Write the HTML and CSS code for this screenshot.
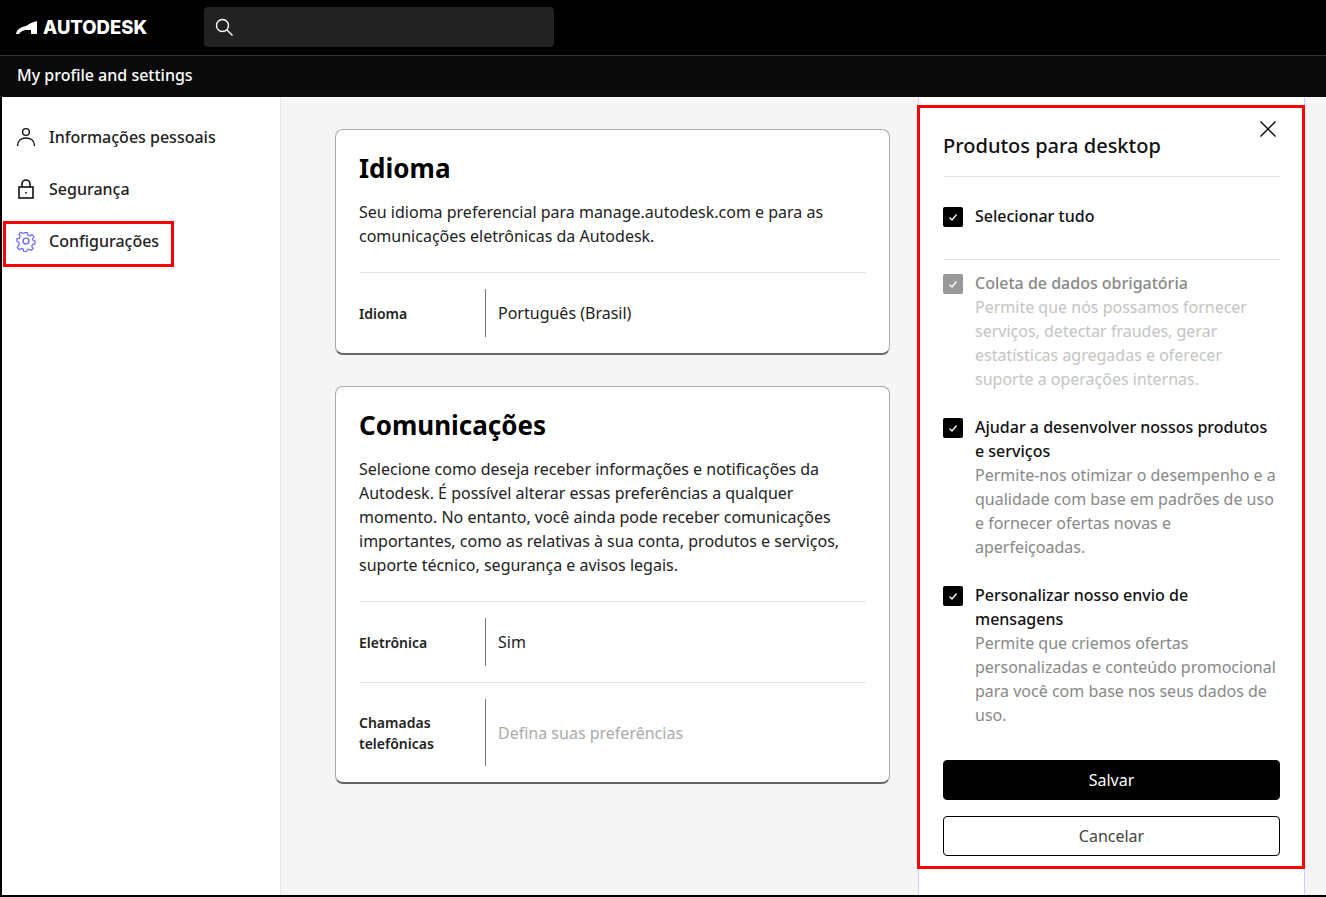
FILE: index.html
```html
<!DOCTYPE html>
<html lang="pt-BR">
<head>
  <meta charset="UTF-8">
  <title>My profile and settings</title>
  <link rel="stylesheet" href="styles.css">
</head>
<body>
  <div class="frame">
    <header class="topbar">
      <div class="logo">
        <svg class="logo-mark" width="21" height="13" viewBox="0 0 21 13"><path d="M0 13 C1 8 5 6 10 5 L15 2 L21 0 L21 13 L15 13 L15 9 L11 9 C7 9 4 11 3 13 Z" fill="#fff"/></svg>
        <span class="logo-text">AUTODESK</span>
      </div>
      <div class="search">
        <svg width="20" height="20" viewBox="0 0 20 20" fill="none" stroke="#fff" stroke-width="1.4"><circle cx="8.5" cy="8.5" r="6"/><path d="M13 13l5.5 5.5"/></svg>
      </div>
    </header>
    <div class="subbar">My profile and settings</div>

    <div class="content">
      <nav class="sidebar">
        <a class="nav-item">
          <svg width="20" height="20" viewBox="0 0 20 20" fill="none" stroke="#111" stroke-width="1.4"><circle cx="10" cy="5" r="3.4"/><path d="M1.5 19c0-5 3.5-8 8.500-8s8.500 3 8.500 8"/></svg>
          Informações pessoais
        </a>
        <a class="nav-item">
          <svg width="20" height="20" viewBox="0 0 20 20" fill="none" stroke="#111" stroke-width="1.6"><rect x="3" y="8" width="14" height="11"/><path d="M6 8V5a4 4 0 0 1 8 0v3"/><path d="M10 13v1.500"/></svg>
          Segurança
        </a>
        <a class="nav-item active">
          <svg width="22" height="22" viewBox="0 0 24 24" fill="none" stroke="#6a6af5" stroke-width="1.500" stroke-linejoin="round"><circle cx="12" cy="12" r="3.200"/><path d="M10.300 2h3.400l.6 3 2.300 1 2.600-1.600 2.400 2.400L20 9.400l1 2.300 2 .6v3.400l-3 .6-1 2.300 1.600 2.600-2.400 2.400-2.600-1.600-2.300 1-.6 2h-3.400l-.6-3-2.300-1-2.600 1.600-2.400-2.400L4 15.600l-1-2.300-2-.6V9.300l3-.6 1-2.300-1.600-2.600 2.400-2.400 2.600 1.600 2.300-1z" transform="translate(1.200 1.100) scale(.9)"/></svg>
          Configurações
        </a>
      </nav>

      <main class="main">
        <section class="card">
          <h2>Idioma</h2>
          <p>Seu idioma preferencial para manage.autodesk.com e para as comunicações eletrônicas da Autodesk.</p>
          <div class="row">
            <div class="row-label">Idioma</div>
            <div class="row-value">Português (Brasil)</div>
          </div>
        </section>
        <section class="card">
          <h2>Comunicações</h2>
          <p>Selecione como deseja receber informações e notificações da Autodesk. É possível alterar essas preferências a qualquer momento. No entanto, você ainda pode receber comunicações importantes, como as relativas à sua conta, produtos e serviços, suporte técnico, segurança e avisos legais.</p>
          <div class="row">
            <div class="row-label">Eletrônica</div>
            <div class="row-value">Sim</div>
          </div>
          <div class="row tall">
            <div class="row-label">Chamadas telefônicas</div>
            <div class="row-value empty">Defina suas preferências</div>
          </div>
        </section>
      </main>

      <aside class="panel">
        <button class="close" aria-label="Fechar">
          <svg width="18" height="18" viewBox="0 0 18 18" stroke="#111" stroke-width="1.500"><path d="M1.500 1.500l15 15M16.500 1.500l-15 15"/></svg>
        </button>
        <h3>Produtos para desktop</h3>
        <div class="select-all">
          <span class="check"><svg width="12" height="12" viewBox="0 0 12 12" fill="none" stroke="#fff" stroke-width="1.300"><path d="M2.500 6.500l2.500 2.500 4.500-5.500"/></svg></span>
          <strong>Selecionar tudo</strong>
        </div>
        <div class="option disabled">
          <span class="check"><svg width="12" height="12" viewBox="0 0 12 12" fill="none" stroke="#fff" stroke-width="1.300"><path d="M2.500 6.500l2.500 2.500 4.500-5.500"/></svg></span>
          <div>
            <strong>Coleta de dados obrigatória</strong>
            <p>Permite que nós possamos fornecer serviços, detectar fraudes, gerar estatísticas agregadas e oferecer suporte a operações internas.</p>
          </div>
        </div>
        <div class="option">
          <span class="check"><svg width="12" height="12" viewBox="0 0 12 12" fill="none" stroke="#fff" stroke-width="1.300"><path d="M2.500 6.500l2.500 2.500 4.500-5.500"/></svg></span>
          <div>
            <strong>Ajudar a desenvolver nossos produtos e serviços</strong>
            <p>Permite-nos otimizar o desempenho e a qualidade com base em padrões de uso e fornecer ofertas novas e aperfeiçoadas.</p>
          </div>
        </div>
        <div class="option">
          <span class="check"><svg width="12" height="12" viewBox="0 0 12 12" fill="none" stroke="#fff" stroke-width="1.300"><path d="M2.500 6.500l2.500 2.500 4.500-5.500"/></svg></span>
          <div>
            <strong>Personalizar nosso envio de mensagens</strong>
            <p>Permite que criemos ofertas personalizadas e conteúdo promocional para você com base nos seus dados de uso.</p>
          </div>
        </div>
        <button class="btn primary">Salvar</button>
        <button class="btn">Cancelar</button>
      </aside>

      <div class="mark mark-nav"></div>
      <div class="mark mark-panel"></div>
    </div>
  </div>
</body>
</html>
```

FILE: styles.css
```css
* {
  box-sizing: border-box;
}
html, body {
  margin: 0;
  height: 100%;
}
body {
  font-family: "Noto Sans", Arial, sans-serif;
  font-size: 16px;
  line-height: 24px;
  color: #222;
  background: #000;
  overflow: hidden;
}
.frame {
  height: 895px;
  display: flex;
  flex-direction: column;
}
.topbar {
  height: 56px;
  background: #000;
  border-bottom: 1px solid #333;
  display: flex;
  align-items: center;
  padding-bottom: 1px;
}
.logo {
  width: 204px;
  padding-left: 16px;
  display: flex;
  align-items: center;
  gap: 6px;
}
.logo-text {
  font-family: Inter, sans-serif;
  font-weight: 800;
  font-size: 18.500px;
  line-height: 24px;
  color: #fff;
}
.search {
  width: 350px;
  height: 40px;
  background: #222;
  border-radius: 4px;
  display: flex;
  align-items: center;
  padding-left: 10px;
}
.subbar {
  height: 41px;
  background: #0a0a0a;
  color: #fff;
  font-weight: 500;
  padding: 7px 0 0 17px;
}
.content {
  flex: 1;
  display: flex;
  position: relative;
  margin-left: 2px;
  background: #f5f5f5;
}
.sidebar {
  width: 279px;
  background: #fff;
  border-right: 1px solid #e5e5e5;
  padding-top: 14px;
}
.nav-item {
  height: 52px;
  display: flex;
  align-items: center;
  gap: 13px;
  padding-left: 14px;
  font-weight: 500;
  color: #222;
  position: relative;
}
.nav-item.active {
  gap: 12px;
  padding-left: 13px;
}
.nav-item.active::before {
  content: "";
  position: absolute;
  left: 3px;
  top: 11px;
  height: 30px;
  width: 1px;
  background: #6a6af5;
}
.main {
  width: 637px;
  padding: 32px 0 0 54px;
}
.card {
  width: 555px;
  background: #fff;
  border: 1px solid #aaa;
  border-bottom: 2px solid #666;
  border-radius: 8px;
  padding: 19px 23px 0;
  margin-bottom: 31px;
}
.card h2 {
  margin: 0 0 13px;
  font-size: 26px;
  line-height: 38px;
  font-weight: 700;
  color: #000;
}
.card p {
  margin: 0 0 24px;
}
.row {
  border-top: 1px solid #e5e5e5;
  padding: 16px 0;
  display: flex;
  align-items: stretch;
  height: 81px;
}
.row.tall {
  height: 100px;
}
.row-label {
  width: 126px;
  font-size: 14px;
  line-height: 21px;
  font-weight: 600;
  display: flex;
  align-items: center;
  color: #222;
}
.row-value {
  border-left: 1px solid #777;
  padding-left: 12px;
  display: flex;
  align-items: center;
  flex: 1;
}
.row-value.empty {
  color: #aaa;
}
.panel {
  width: 387px;
  background: #fff;
  border-left: 1px solid #ccf;
  border-right: 1px solid #ccf;
  padding: 34px 24px 0;
  position: relative;
}
.close {
  position: absolute;
  right: 27px;
  top: 23px;
  padding: 0;
  border: 0;
  background: none;
  line-height: 0;
}
.panel h3 {
  margin: 0;
  padding-bottom: 15px;
  border-bottom: 1px solid #e5e5e5;
  font-size: 20px;
  line-height: 30px;
  font-weight: 500;
  color: #111;
}
.select-all {
  height: 83px;
  padding-top: 27px;
  border-bottom: 1px solid #e5e5e5;
  display: flex;
  gap: 12px;
  margin-bottom: 11px;
}
.select-all strong, .option strong {
  font-weight: 500;
  color: #111;
}
.check {
  width: 20px;
  height: 20px;
  flex: none;
  background: #000;
  border-radius: 2px;
  margin-top: 3px;
  display: flex;
  align-items: center;
  justify-content: center;
}
.option {
  display: flex;
  gap: 12px;
  margin-bottom: 24px;
}
.option strong {
  display: block;
}
.option p {
  margin: 0;
  color: #888;
}
.option.disabled .check {
  background: #999;
}
.option.disabled strong {
  color: #888;
}
.option.disabled p {
  color: #c4c4c4;
}
.btn {
  display: block;
  width: 100%;
  height: 40px;
  margin-bottom: 16px;
  font: inherit;
  background: #fff;
  color: #444;
  border: 1px solid #000;
  border-radius: 4px;
}
.btn.primary {
  background: #000;
  color: #fff;
  margin-top: 33px;
}
.mark {
  position: absolute;
  border: 3px solid #f00;
  pointer-events: none;
}
.mark-nav {
  left: 1px;
  top: 124px;
  width: 171px;
  height: 46px;
}
.mark-panel {
  left: 915px;
  top: 8px;
  width: 388px;
  height: 764px;
}
```
